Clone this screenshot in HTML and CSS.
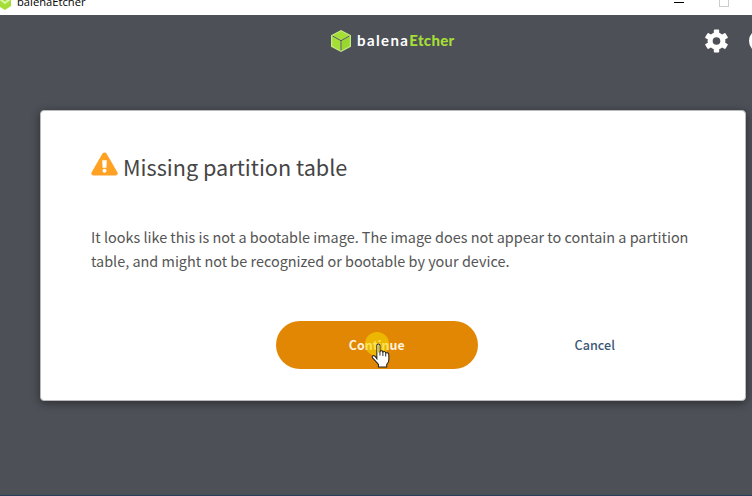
FILE: index.html
```html
<!DOCTYPE html>
<html lang="en">
<head>
<meta charset="utf-8">
<title>balenaEtcher</title>
<link rel="stylesheet" href="styles.css">
</head>
<body>
<div class="window">
  <div class="titlebar">
    <svg class="app-icon" viewBox="0 0 12 16"><path d="M0 0H11V12L5 16L0 13Z" fill="#a5de37"/><path d="M0 5L5 9L10 5" fill="none" stroke="#dcf5ac" stroke-width="2"/></svg>
    <span class="app-title">balenaEtcher</span>
    <span class="minimize"></span>
    <span class="maximize"></span>
  </div>
  <header class="header">
    <div class="brand">
      <svg class="cube" viewBox="0 0 20 22"><path d="M10 0L20 5.2V16.8L10 22L0 16.8V5.2Z" fill="#c5ea83"/><path d="M10 1.3L18.3 5.5L10 10L1.7 5.5Z" fill="#a5de37"/><path d="M1.2 6.5L9.4 11V20.4L1.2 16Z" fill="#a5de37"/><path d="M18.8 6.5L10.6 11V20.4L18.8 16Z" fill="#97d72e"/><path d="M1.5 6L10 10.7L18.5 6M10 10.7V20.5" fill="none" stroke="#4d5057" stroke-width="1"/></svg>
      <span class="wordmark"><span class="balena">balena</span><span class="etcher">Etcher</span></span>
    </div>
    <svg class="gear" viewBox="0 0 24 24"><path fill="#fff" fill-rule="evenodd" d="M9.2 0.8Q9.2 0 10 0H14Q14.8 0 14.8 .8V3.5Q16.4 4.1 17.8 5.2L20.2 3.8Q21 3.4 21.5 4.1L23.7 7.8Q24.1 8.5 23.4 9L21.1 10.3Q21.4 12 21.1 13.7L23.4 15Q24.1 15.5 23.7 16.2L21.5 19.9Q21 20.6 20.2 20.2L17.8 18.8Q16.4 19.9 14.8 20.5V23.2Q14.8 24 14 24H10Q9.2 24 9.2 23.2V20.5Q7.6 19.9 6.2 18.8L3.8 20.2Q3 20.6 2.5 19.9L.3 16.2Q-.1 15.5 .6 15L2.9 13.7Q2.6 12 2.9 10.3L.6 9Q-.1 8.5 .3 7.8L2.5 4.1Q3 3.4 3.8 3.8L6.2 5.2Q7.6 4.1 9.2 3.5ZM12 8A4 4 0 1 0 12 16A4 4 0 1 0 12 8Z"/></svg>
    <span class="help"></span>
  </header>
  <main class="modal">
    <h1 class="heading">
      <svg class="warning" viewBox="0 0 28 24"><path fill="#ffa224" fill-rule="evenodd" d="M11.9 1.2Q14 -1.2 16.1 1.2L27.5 20.8Q28.3 23.3 25.7 24H2.3Q-.3 23.3 .5 20.8ZM11.6 8.2L12 15.9H16L16.4 8.2ZM14 16.9A2.1 2.1 0 1 0 14 21.1A2.1 2.1 0 1 0 14 16.9Z"/></svg>
      <span class="heading-text">Missing partition table</span>
    </h1>
    <p class="message">It looks like this is not a bootable image. The image does not appear to contain a partition<br>table, and might not be recognized or bootable by your device.</p>
    <div class="actions">
      <button class="continue"><span class="label">Continue</span>
        <span class="click-spot"></span>
        <svg class="pointer" viewBox="0 0 18 24"><path d="M5.5 15V2.5Q5.5 1 7 1T8.5 2.5V8Q10.5 6.5 11.3 8.6Q13.2 7.5 14 9.5Q17 8.7 17 11.5V16Q17 18.5 15 20.5V23H7V20.5Q5 18 1.3 14.2Q.6 12.5 2.2 12.1Q3.5 12 5.5 15Z" fill="#fff" stroke="#222" stroke-width="1"/><path d="M6 3Q7 1.4 8 3V9H6Z" fill="#dcc43a"/><path d="M8.5 8V12M11.3 8.6V12.5M14 9.5V13" stroke="#222" stroke-width=".9" fill="none"/></svg>
      </button>
      <button class="cancel">Cancel</button>
    </div>
  </main>
</div>
</body>
</html>
```
FILE: styles.css
```css
* { box-sizing: border-box; }
body { margin: 0; overflow: hidden; font-family: "Noto Sans CJK SC", "Open Sans", sans-serif; }
.window { width: 752px; height: 496px; background: #4d5057; border-bottom: 1px solid #26405c; overflow: hidden; }
.titlebar { height: 15px; background: #fff; display: flex; align-items: flex-start; overflow: hidden; }
.app-icon { width: 12px; height: 16px; margin-top: -6px; }
.app-title { margin: -6px 0 0 5px; width: 653px; font: 11.2px/16px "Open Sans", sans-serif; color: #000; }
.minimize { width: 10px; height: 1px; margin: 2px 35px 0 4px; background: #000; flex: none; }
.maximize { width: 10px; height: 7px; border: 1px solid #ccc; border-top: 0; flex: none; }
.header { height: 95px; display: flex; align-items: flex-start; padding: 15px 0 0 331px; }
.brand { display: flex; width: 374px; flex: none; }
.cube { width: 20px; height: 22px; }
.wordmark { margin-left: 6px; font: bold 15px/21px "Lato", sans-serif; white-space: nowrap; }
.balena { color: #fff; letter-spacing: 1.4px; }
.etcher { color: #a5de37; font-weight: 900; letter-spacing: .3px; }
.gear { width: 23px; height: 24px; margin-top: -1px; flex: none; }
.help { width: 24px; height: 24px; margin: -1px 0 0 21px; border-radius: 50%; background: #fff; flex: none; }
.modal { width: 706px; height: 291px; margin-left: 40px; padding: 42px 50px 0; background: #fff; border: 1px solid #b9babc; border-radius: 4px; box-shadow: 0 2px 10px rgba(0,0,0,.45); }
.heading { display: flex; margin: -1px 0 0; height: 30px; font-weight: 400; font-size: 21.65px; line-height: 30px; color: #454545; }
.warning { width: 27px; height: 24px; margin-right: 5px; }
.heading-text { white-space: nowrap; }
.message { margin: 43px 0 0; font-size: 14.43px; line-height: 24px; color: #555; white-space: nowrap; }
.actions { display: flex; margin: 48px 0 0 185px; }
button { border: 0; padding: 0; font: 700 12.4px/48px "Noto Sans CJK SC", sans-serif; }
.continue { position: relative; width: 202px; height: 48px; border-radius: 24px; background: #e18703; color: #fff; }
.label { color: #fff3df; }
.click-spot { position: absolute; left: 89px; top: 11px; width: 24px; height: 24px; border-radius: 50%; background: rgba(245,215,0,.6); }
.pointer { position: absolute; left: 95px; top: 22px; width: 19px; height: 25px; }
.cancel { width: 201px; margin-left: 17px; background: none; color: #3c5876; font-weight: 500; font-size: 12.6px; }
```
